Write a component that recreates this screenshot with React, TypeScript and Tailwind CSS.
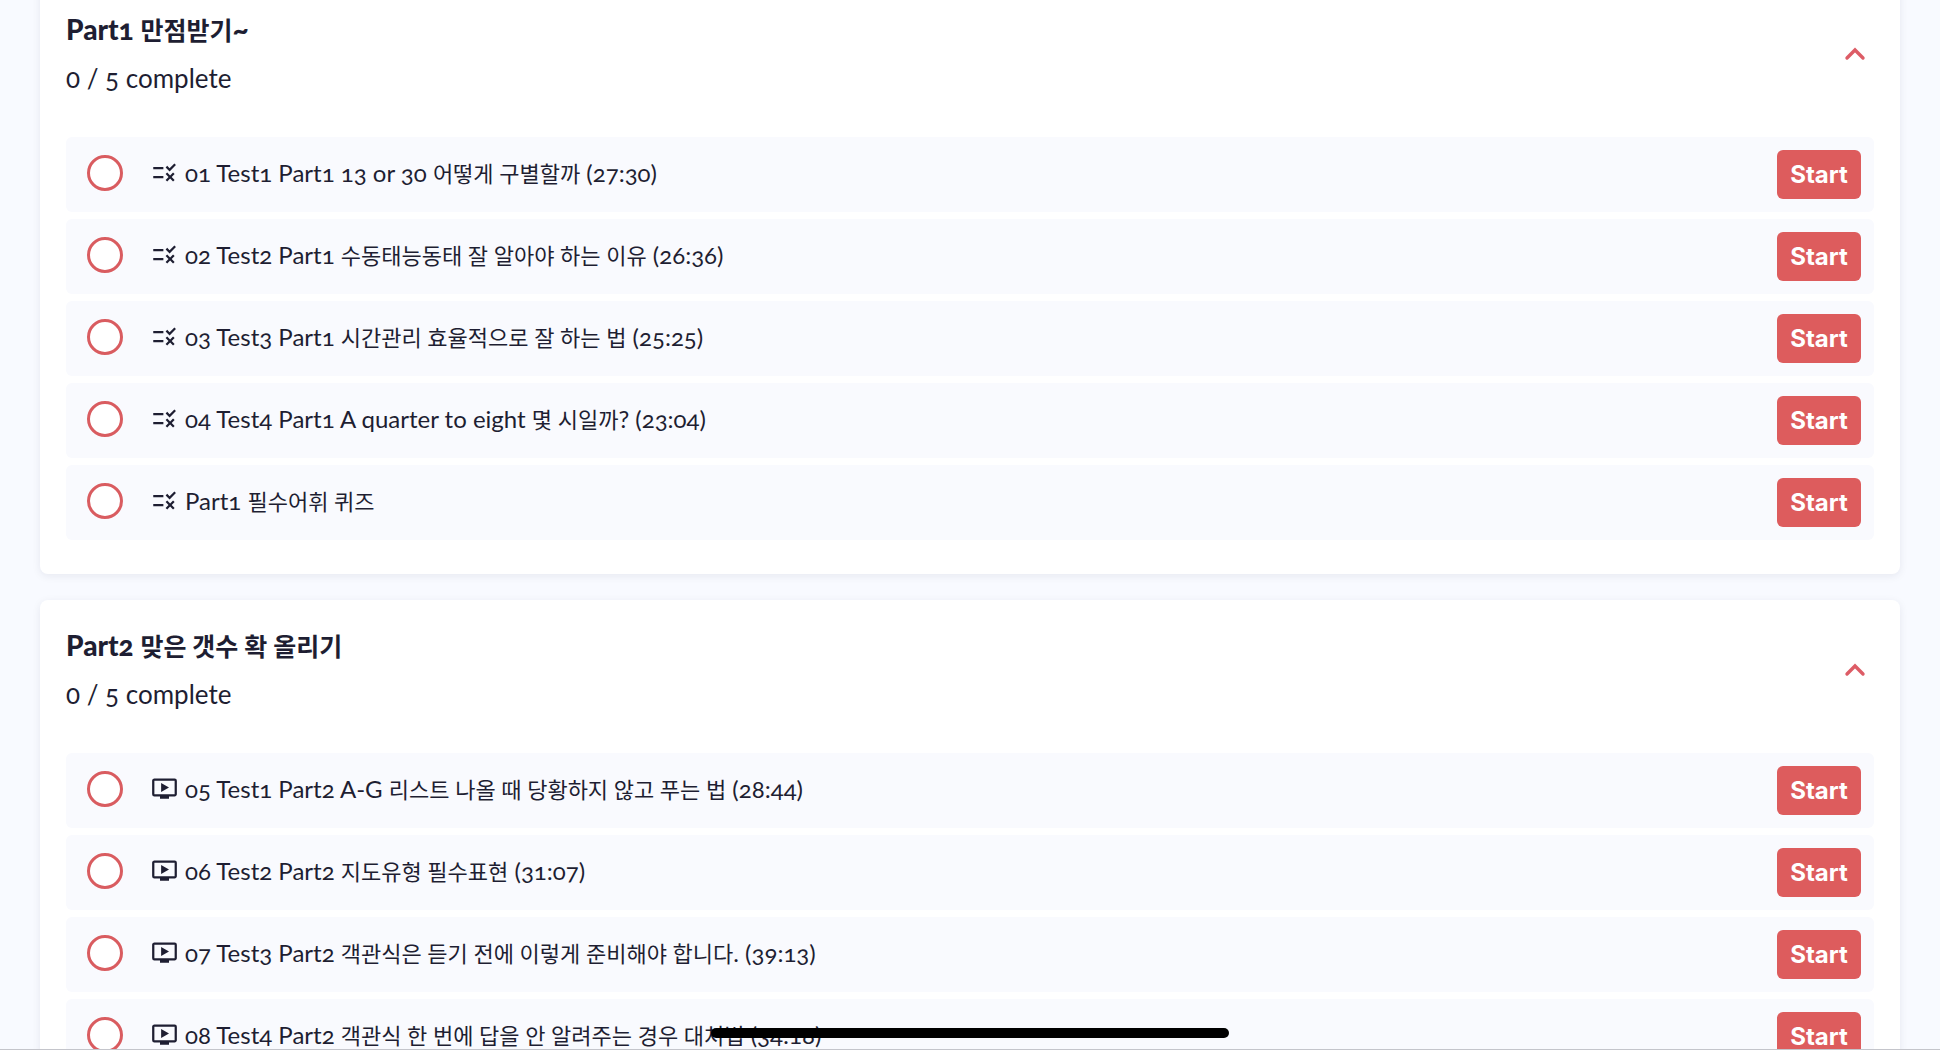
import { MdOndemandVideo, MdRule } from 'react-icons/md';

type Kind = 'quiz' | 'video';
type Lesson = { kind: Kind; title: string };
type Section = { title: string; progress: string; lessons: Lesson[] };

const sections: Section[] = [
  {
    title: 'Part1 만점받기~',
    progress: '0 / 5 complete',
    lessons: [
      { kind: 'quiz', title: '01 Test1 Part1 13 or 30 어떻게 구별할까 (27:30)' },
      { kind: 'quiz', title: '02 Test2 Part1 수동태능동태 잘 알아야 하는 이유 (26:36)' },
      { kind: 'quiz', title: '03 Test3 Part1 시간관리 효율적으로 잘 하는 법 (25:25)' },
      { kind: 'quiz', title: '04 Test4 Part1 A quarter to eight 몇 시일까? (23:04)' },
      { kind: 'quiz', title: 'Part1 필수어휘 퀴즈' },
    ],
  },
  {
    title: 'Part2 맞은 갯수 확 올리기',
    progress: '0 / 5 complete',
    lessons: [
      { kind: 'video', title: '05 Test1 Part2 A-G 리스트 나올 때 당황하지 않고 푸는 법 (28:44)' },
      { kind: 'video', title: '06 Test2 Part2 지도유형 필수표현 (31:07)' },
      { kind: 'video', title: '07 Test3 Part2 객관식은 듣기 전에 이렇게 준비해야 합니다. (39:13)' },
      { kind: 'video', title: '08 Test4 Part2 객관식 한 번에 답을 안 알려주는 경우 대처법 (34:18)' },
    ],
  },
];

/* Hangul is set slightly smaller than the Latin text beside it. */
function MixedText({ text, hangulClass }: { text: string; hangulClass: string }) {
  const parts = text.split(/([가-힣][가-힣 ]*[가-힣]|[가-힣])/);
  return (
    <>
      {parts.map((part, i) =>
        i % 2 === 1 ? (
          <span key={i} className={hangulClass}>
            {part}
          </span>
        ) : (
          part
        ),
      )}
    </>
  );
}

function LessonRow({ lesson }: { lesson: Lesson }) {
  const Icon = lesson.kind === 'quiz' ? MdRule : MdOndemandVideo;
  return (
    <li className="flex h-[75px] items-center rounded-md bg-[#f9fafe] pl-[21px] pr-[13px]">
      <input
        type="checkbox"
        aria-label={lesson.title}
        className="mb-1 size-9 shrink-0 appearance-none rounded-full border-[3px] border-[#d95c60] bg-white"
      />
      <a href="#lesson" className="mb-1 ml-7 flex min-w-0 flex-1 items-center gap-[7px]">
        <Icon className="size-[27px] shrink-0" />
        <span className="whitespace-pre text-2xl">
          <MixedText text={lesson.title} hangulClass="text-[22px]" />
        </span>
      </a>
      <button
        type="button"
        className="h-[49px] w-[84px] rounded-md bg-[#dd5c5d] pt-px font-['Inter',sans-serif] text-2xl font-bold text-white"
      >
        Start
      </button>
    </li>
  );
}

function SectionCard({ section }: { section: Section }) {
  return (
    <section className="rounded-lg bg-white px-[26px] pb-[34px] shadow-[0_2px_8px_rgba(30,30,60,0.08)]">
      <header className="flex items-center justify-between py-[27px] pr-2">
        <div>
          <h2 className="font-['Lato_Black','Lato','Noto_Sans_CJK_KR',sans-serif] text-[28px] leading-9 font-black">
            <MixedText text={section.title} hangulClass="text-[25px] font-bold" />
          </h2>
          <p className="mt-3 text-[26px] leading-9">{section.progress}</p>
        </div>
        <button type="button" aria-label="Collapse section">
          <svg viewBox="0 0 22 14" className="h-[14px] w-[22px] text-[#dd5c66]" fill="none" stroke="currentColor" strokeWidth="3.4" strokeLinecap="round">
            <path d="M3 11 L11 3 L19 11" />
          </svg>
        </button>
      </header>
      <ul className="flex flex-col gap-[7px] pt-3.5">
        {section.lessons.map((lesson) => (
          <LessonRow key={lesson.title} lesson={lesson} />
        ))}
      </ul>
    </section>
  );
}

export default function App() {
  return (
    <main className="relative h-screen overflow-hidden bg-[#f8faff] font-['Lato','Noto_Sans_CJK_KR',sans-serif] text-[#1e1e32] [font-variant-numeric:oldstyle-nums]">
      <div className="-mt-4 flex flex-col gap-[26px] px-10">
        {sections.map((section) => (
          <SectionCard key={section.title} section={section} />
        ))}
      </div>
      <div className="absolute inset-x-0 bottom-0 h-px bg-[#c4c5cb]" />
      <div className="absolute bottom-3 left-1/2 h-[10px] w-[518px] -translate-x-1/2 rounded-full bg-black" />
    </main>
  );
}
